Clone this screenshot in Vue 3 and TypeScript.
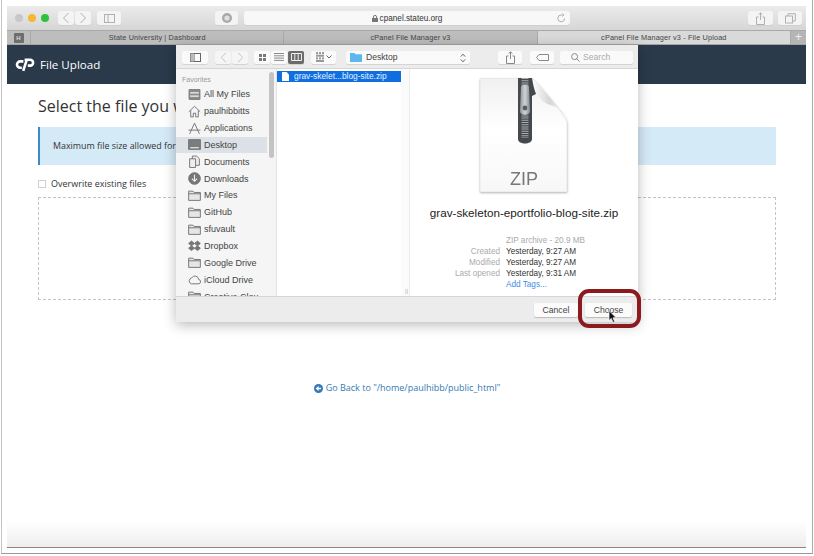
<template>
  <div class="shot">
    <div class="frame">
      <div class="window">
        <div class="toolbar">
          <div class="lights">
            <span class="light grey" />
            <span class="light yellow" />
            <span class="light green" />
          </div>
          <div class="btn-group">
            <button class="tb-btn nav"><svg width="8" height="12" viewBox="0 0 8 12"><path d="M6.5 1 1.5 6l5 5" class="stroke" /></svg></button>
            <button class="tb-btn nav"><svg width="8" height="12" viewBox="0 0 8 12"><path d="M1.5 1l5 5-5 5" class="stroke" /></svg></button>
          </div>
          <button class="tb-btn sidebar-btn">
            <svg width="11" height="9" viewBox="0 0 11 9"><rect x=".5" y=".5" width="10" height="8" class="stroke" /><path d="M4 .5v8" class="stroke" /></svg>
          </button>
          <button class="tb-btn reader-btn">
            <svg width="12" height="12" viewBox="0 0 12 12"><circle cx="6" cy="6" r="5" fill="#a9a9a9" /><circle cx="6" cy="6" r="2.6" fill="#e0e0e0" /></svg>
          </button>
          <div class="address">
            <span class="url"><svg class="lock" width="6" height="7" viewBox="0 0 6 7"><path d="M1.4 3V2a1.6 1.6 0 0 1 3.2 0v1" fill="none" stroke="#777" /><rect y="3" width="6" height="4" fill="#777" /></svg>cpanel.stateu.org</span>
            <svg class="reload" width="9" height="10" viewBox="0 0 9 10"><path d="M7.6 5.4A3.4 3.4 0 1 1 4.5 2h2" class="stroke" /><path d="M5.4.6 6.9 2 5.4 3.4" class="stroke" /></svg>
          </div>
          <button class="tb-btn share-btn">
            <svg width="9" height="13" viewBox="0 0 9 13"><path d="M2.5 5H.5v7.5h8V5h-2M4.5 8V1M2.6 2.6 4.5.8l1.9 1.8" class="stroke" /></svg>
          </button>
          <button class="tb-btn tabs-btn">
            <svg width="11" height="11" viewBox="0 0 11 11"><rect x=".5" y="3" width="7" height="7" class="stroke" /><path d="M3 3V.7h7.3V8H7.5" class="stroke" /></svg>
          </button>
        </div>

        <div class="tabs">
          <div class="tab-pin"><span>H</span></div>
          <div class="tab">State University | Dashboard</div>
          <div class="tab">cPanel File Manager v3</div>
          <div class="tab active">cPanel File Manager v3 - File Upload</div>
          <div class="tab-add">+</div>
        </div>

        <header class="app-header">
          <svg class="cp-logo" width="20" height="14" viewBox="0 0 20 14" fill="none" stroke="#fff" stroke-width="2.6">
            <path d="M8.4 3.4H5.2a3.2 3.2 0 0 0 0 6.4h1.6" />
            <path d="M9.6 1.8h5.6a2.9 2.9 0 0 1 0 5.8h-2.4" />
            <path d="M11.6 2.4 8.2 12.8" />
          </svg>
          <span>File Upload</span>
        </header>

        <main class="page">
          <h1>Select the file you w</h1>
          <div class="info">Maximum file size allowed for</div>
          <label class="overwrite"><span class="check" />Overwrite existing files</label>
          <div class="dropzone" />
          <a class="back">
            <svg width="9" height="9" viewBox="0 0 9 9"><circle cx="4.5" cy="4.5" r="4.5" fill="#337ab7" /><path d="M7 4.5H3M4.6 2.6 2.6 4.5l2 1.9" fill="none" stroke="#fff" stroke-width="1.3" /></svg>
            Go Back to "/home/paulhibb/public_html"
          </a>
        </main>
        <div class="bottom-fade" />

        <section class="dialog">
          <div class="dlg-toolbar">
            <button class="d-btn w-side"><svg width="11" height="9" viewBox="0 0 11 9"><rect x=".5" y=".5" width="10" height="8" class="dark" /><path d="M4 .5v8" class="dark" /><path d="M.5 .5h3.5v8H.5z" fill="#bbb" /></svg></button>
            <div class="d-group nav-group">
              <button class="d-btn w-nav faded"><svg width="7" height="11" viewBox="0 0 7 11"><path d="M6 .8 1.2 5.5 6 10.2" class="pale" /></svg></button>
              <button class="d-btn w-nav faded"><svg width="7" height="11" viewBox="0 0 7 11"><path d="M1 .8l4.8 4.7L1 10.2" class="pale" /></svg></button>
            </div>
            <div class="d-group views">
              <button class="d-btn w-view"><svg width="7" height="7" viewBox="0 0 7 7" fill="#777"><rect width="3" height="3" /><rect x="4" width="3" height="3" /><rect y="4" width="3" height="3" /><rect x="4" y="4" width="3" height="3" /></svg></button>
              <button class="d-btn w-view"><svg width="10" height="8" viewBox="0 0 10 8"><path d="M0 .5h10M0 2.8h10M0 5.1h10M0 7.4h10" class="mid" /></svg></button>
              <button class="d-btn w-view on"><svg width="11" height="8" viewBox="0 0 11 8"><path d="M.5.5h10v7H.5zM3.8.5v7M7.2.5v7" fill="none" stroke="#eee" /></svg></button>
            </div>
            <button class="d-btn w-arrange">
              <svg width="8" height="10" viewBox="0 0 8 10" fill="#999"><rect width="2" height="2" /><rect x="3" width="2" height="2" /><rect x="6" width="2" height="2" /><rect y="2.7" width="8" height="2" /><rect y="5.4" width="2" height="2" /><rect x="3" y="5.4" width="2" height="2" /><rect x="6" y="5.4" width="2" height="2" /><rect y="8" width="8" height="2" /></svg>
              <svg width="6" height="4" viewBox="0 0 6 4"><path d="M.5.5 3 3 5.5.5" class="dark" /></svg>
            </button>
            <div class="d-btn path">
              <svg width="12" height="10" viewBox="0 0 12 10"><path d="M0 1h4.5l1 1.2H12V10H0z" fill="#5cb8ec" /></svg>
              <span>Desktop</span>
              <svg class="updown" width="6" height="10" viewBox="0 0 6 10"><path d="M.8 3.6 3 1.2l2.2 2.4M.8 6.4 3 8.8l2.2-2.4" class="dark" /></svg>
            </div>
            <button class="d-btn w-share"><svg width="9" height="13" viewBox="0 0 9 13"><path d="M2.5 5H.5v7.5h8V5h-2M4.5 8V1M2.6 2.6 4.5.8l1.9 1.8" class="mid" /></svg></button>
            <button class="d-btn w-tag"><svg width="13" height="7" viewBox="0 0 13 7"><path d="M3 .5h9.5v6H3L.6 3.5z" class="mid" /></svg></button>
            <div class="d-btn search"><svg width="9" height="9" viewBox="0 0 9 9"><circle cx="3.6" cy="3.6" r="3" class="mid" /><path d="M5.8 5.8 8.6 8.6" class="mid" /></svg><span>Search</span></div>
          </div>

          <div class="dlg-body">
            <aside class="places">
              <div class="places-title">Favorites</div>
              <ul>
                <li v-for="p in places" :key="p.name" :class="{ current: p.name === 'Desktop' }">
                  <svg width="13" height="13" viewBox="0 0 12 12">
                    <path :d="p.icon" :fill="p.fill" stroke="#777" stroke-width=".9" />
                    <path v-if="p.mark" :d="p.mark" fill="none" stroke="#f2f2f2" />
                  </svg>
                  {{ p.name }}
                </li>
              </ul>
              <span class="places-scroll" />
            </aside>
            <div class="column">
              <div class="file-row">
                <svg width="7" height="9" viewBox="0 0 7 9"><path d="M0 0h4.6L7 2.4V9H0z" fill="#fff" /></svg>
                grav-skelet...blog-site.zip
              </div>
              <span class="col-handle">||</span>
            </div>
            <div class="preview">
              <div class="zip-icon">
                <svg width="88" height="114" viewBox="0 0 88 114">
                  <defs>
                    <linearGradient id="zipPaper" x1="0" y1="0" x2="0" y2="1">
                      <stop offset="0" stop-color="#f0f0f0" />
                      <stop offset=".45" stop-color="#fff" />
                      <stop offset="1" stop-color="#f7f7f7" />
                    </linearGradient>
                    <linearGradient id="zipFlap" x1="0" y1="0" x2="1" y2="0">
                      <stop offset="0" stop-color="#fff" />
                      <stop offset=".5" stop-color="#d6d6d6" />
                      <stop offset="1" stop-color="#fbfbfb" />
                    </linearGradient>
                    <linearGradient id="zipPull" x1="0" y1="0" x2="1" y2="0">
                      <stop offset="0" stop-color="#8e9499" />
                      <stop offset=".5" stop-color="#cfd4d8" />
                      <stop offset="1" stop-color="#868b90" />
                    </linearGradient>
                  </defs>
                  <path d="M0 0h52C60 8 80 30 87 44v70H0z" fill="url(#zipPaper)" stroke="#dcdcdc" stroke-width=".6" />
                  <path d="M52 0c2 14 8 24 18 27 8 2 15 7 17 17C80 30 60 8 52 0z" fill="url(#zipFlap)" />
                  <path d="M38 0h14c1 6 2 11 4 16l-4 2v43c0 6-14 6-14 0z" fill="#45484c" />
                  <path d="M45 0v60" stroke="#a9adb0" stroke-width="7" stroke-dasharray="1 1.2" />
                  <path d="M41 9c0-3 8-3 8 0l1 24c0 5-10 5-10 0z" fill="url(#zipPull)" />
                  <circle cx="45" cy="30" r="2.4" fill="#5a5d61" />
                </svg>
                <span class="zip-label">ZIP</span>
              </div>
              <div class="file-name">grav-skeleton-eportfolio-blog-site.zip</div>
              <dl class="meta">
                <dt />
                <dd class="kind">ZIP archive - 20.9 MB</dd>
                <template v-for="m in meta" :key="m.k">
                  <dt>{{ m.k }}</dt>
                  <dd>{{ m.v }}</dd>
                </template>
                <dt />
                <dd class="tags">Add Tags...</dd>
              </dl>
            </div>
          </div>

          <div class="dlg-footer">
            <button class="foot-btn cancel">Cancel</button>
            <button class="foot-btn choose">Choose</button>
          </div>
        </section>

        <div class="callout" />
        <svg class="cursor" width="9" height="13" viewBox="0 0 9 13"><path d="M1 .6v10l2.3-2.2 1.7 4 1.7-.7-1.7-3.9h3.2z" fill="#111" stroke="#fff" stroke-width=".7" /></svg>
      </div>
    </div>
  </div>
</template>

<script setup lang="ts">
type Place = { name: string; icon: string; fill: string; mark?: string };

const folder = "M.6 2h4l1 1.2h5.8v7.3H.6zM.6 4.4h10.8";

const places: Place[] = [
  { name: "All My Files", icon: "M1 1.5h10v9H1z", fill: "#8d8d8d", mark: "M2 4.5h8M2 7.5h8" },
  { name: "paulhibbitts", icon: "M.8 6.2 6 1.2l5.2 5M2.5 5v6h2.4V7.6h2.2V11h2.4V5", fill: "none" },
  { name: "Applications", icon: "M6 1 1.5 11M6 1l4.5 10M.5 7.5h11", fill: "none" },
  { name: "Desktop", icon: "M.5 1.5h11v9H.5z", fill: "#7c7c7c", mark: "M2 9h8" },
  { name: "Documents", icon: "M1.5 3.5h5.5v8H1.5zM4 3.5v-2.5h4l2.5 2.5v6H7", fill: "#eee" },
  { name: "Downloads", icon: "M6 .6a5.4 5.4 0 1 0 0 10.8A5.4 5.4 0 0 0 6 .6z", fill: "#777", mark: "M6 2.6v6M3.6 6.2 6 8.6l2.4-2.4" },
  { name: "My Files", icon: folder, fill: "#e6e6e6" },
  { name: "GitHub", icon: folder, fill: "#e6e6e6" },
  { name: "sfuvault", icon: folder, fill: "#e6e6e6" },
  { name: "Dropbox", icon: "M3.2 1 .6 3.2l2.6 2.2L6 3.2zM8.8 1 6 3.2l2.8 2.2 2.6-2.2zM3.2 5.4.6 7.6l2.6 2.1L6 7.6zM8.8 5.4 6 7.6l2.8 2.1 2.6-2.1z", fill: "#777" },
  { name: "Google Drive", icon: folder, fill: "#e6e6e6" },
  { name: "iCloud Drive", icon: "M3 10h6.4a2 2 0 0 0 .4-4A3.4 3.4 0 0 0 3.4 4.6 2.8 2.8 0 0 0 3 10z", fill: "none" },
  { name: "Creative Clou", icon: folder, fill: "#e6e6e6" },
];

const meta = [
  { k: "Created", v: "Yesterday, 9:27 AM" },
  { k: "Modified", v: "Yesterday, 9:27 AM" },
  { k: "Last opened", v: "Yesterday, 9:31 AM" },
];
</script>

<style>
html, body {
  margin: 0;
  background: #fff;
}
</style>

<style scoped>
.shot {
  width: 814px;
  height: 556px;
  box-sizing: border-box;
  padding-left: 1px;
  background: #fff;
  overflow: hidden;
  font-family: "Liberation Sans", Arial, sans-serif;
}
.frame {
  width: 812px;
  height: 554px;
  box-sizing: border-box;
  padding: 6px 0 0 5px;
  border-left: 1px solid #c4c4c4;
  border-right: 1px solid #aaa;
  border-bottom: 1px solid #999;
}
.window {
  position: relative;
  width: 799px;
  height: 542px;
  box-sizing: border-box;
  display: flex;
  flex-direction: column;
  background: #fff;
  overflow: hidden;
  border-bottom: 1px solid #8f8480;
}
button {
  padding: 0;
  border: 0;
  font-family: inherit;
  display: flex;
  align-items: center;
  justify-content: center;
}
.stroke {
  fill: none;
  stroke: #b0b0b0;
}
.pale {
  fill: none;
  stroke: #c4c4c4;
}
.mid {
  fill: none;
  stroke: #888;
}
.dark {
  fill: none;
  stroke: #666;
}

.toolbar {
  height: 24px;
  flex: none;
  display: flex;
  align-items: center;
  background: linear-gradient(#ebebeb, #d6d6d6);
}
.lights {
  display: flex;
  gap: 5px;
  margin-left: 8px;
}
.light {
  width: 8px;
  height: 8px;
  border-radius: 50%;
}
.grey { background: #c8c8c8; }
.yellow { background: #f5b82e; }
.green { background: #2ec240; }
.btn-group {
  display: flex;
  gap: 1px;
  margin-left: 9px;
}
.tb-btn {
  height: 14px;
  background: #f4f4f4;
  border-radius: 3px;
  box-shadow: 0 1px 0 #cfcfcf;
}
.nav { width: 16px; }
.sidebar-btn { width: 24px; margin-left: 6px; }
.reader-btn { width: 23px; margin-left: 94px; }
.address {
  width: 326px;
  height: 14px;
  margin-left: 6px;
  background: #f8f8f8;
  border-radius: 3px;
  box-shadow: 0 1px 0 #cfcfcf;
  display: flex;
  align-items: center;
  position: relative;
  justify-content: center;
  font-size: 8.2px;
  color: #333;
}
.lock { margin-right: 2px; }
.url { display: flex; align-items: center; }
.reload { position: absolute; right: 4px; top: 2px; }
.share-btn { width: 25px; margin-left: 178px; }
.tabs-btn { width: 24px; margin-left: 5px; }

.tabs {
  height: 15px;
  flex: none;
  display: flex;
  background: #bdbdbd;
  border-top: 1px solid #a9a9a9;
  border-bottom: 1px solid #a3a3a3;
  box-sizing: border-box;
  font-size: 7.3px;
  line-height: 13px;
  color: #444;
}
.tab-pin {
  width: 24px;
  flex: none;
  border-right: 1px solid #a9a9a9;
  box-sizing: border-box;
  display: flex;
  align-items: center;
  justify-content: center;
}
.tab-pin span {
  width: 10px;
  height: 10px;
  background: #6e6e6e;
  color: #ddd;
  border-radius: 1px;
  font-size: 6px;
  font-weight: bold;
  line-height: 10px;
  text-align: center;
}
.tab {
  flex: 1;
  text-align: center;
  letter-spacing: .15px;
  border-right: 1px solid #a9a9a9;
}
.tab.active { background: #d9d9d9; }
.tab-add {
  width: 15px;
  flex: none;
  text-align: center;
  background: #b5b5b5;
  font-size: 12px;
  color: #eee;
}

.app-header {
  height: 39px;
  flex: none;
  background: #2a3a4a;
  display: flex;
  align-items: center;
  color: #fff;
  font-family: "Open Sans", sans-serif;
  font-size: 11.6px;
}
.cp-logo { margin-left: 8px; margin-right: 5px; }

.page {
  flex: 1;
  padding: 0 30px 0 31px;
  font-family: "Open Sans", sans-serif;
  color: #333;
  position: relative;
}
.page h1 {
  margin: 11px 0 10px;
  font-size: 16px;
  font-weight: 400;
  line-height: 22px;
  white-space: nowrap;
}
.info {
  height: 38px;
  box-sizing: border-box;
  background: #d5eaf7;
  border-left: 2px solid #3d8ac7;
  padding-left: 13px;
  font-size: 8.9px;
  line-height: 38px;
}
.overwrite {
  display: flex;
  align-items: center;
  gap: 5px;
  margin-top: 12px;
  font-size: 9px;
  line-height: 14px;
}
.check {
  width: 6px;
  height: 6px;
  border: 1px solid #d0d0d0;
  background: #fff;
}
.dropzone {
  height: 101px;
  margin-top: 6px;
  border: 1px dashed #c4c4c4;
}
.back {
  display: flex;
  align-items: center;
  justify-content: center;
  gap: 3px;
  margin-top: 81px;
  font-size: 9px;
  line-height: 14px;
  color: #337ab7;
}
.bottom-fade {
  height: 26px;
  flex: none;
  margin-top: -26px;
  z-index: 1;
  background: linear-gradient(rgba(238, 238, 238, 0), #eeeeee);
}

.dialog {
  position: absolute;
  left: 169px;
  top: 39px;
  width: 462px;
  height: 277px;
  z-index: 2;
  display: flex;
  flex-direction: column;
  background: #fff;
  box-shadow: 0 3px 12px rgba(0, 0, 0, .28);
  font-size: 8px;
  color: #444;
}
.dlg-toolbar {
  height: 24px;
  flex: none;
  box-sizing: border-box;
  padding: 1px 5px 0 6px;
  display: flex;
  align-items: center;
  background: #ececec;
  border-bottom: 1px solid #d6d6d6;
}
.d-group { display: flex; gap: 1px; }
.d-btn {
  height: 13px;
  background: #fafafa;
  border-radius: 2px;
  box-shadow: 0 1px 0 #d4d4d4;
  display: flex;
  align-items: center;
  justify-content: center;
}
.faded { background: #f5f5f5; }
.w-side { width: 26px; }
.nav-group { margin-left: 7px; }
.w-nav { width: 16px; }
.views { margin-left: 6px; }
.w-view { width: 16px; }
.on { background: #6b6b6b; }
.w-arrange { width: 25px; margin-left: 7px; gap: 2px; }
.path {
  width: 124px;
  margin-left: 10px;
  justify-content: flex-start;
  gap: 4px;
  padding-left: 4px;
  box-sizing: border-box;
  font-size: 8.6px;
  position: relative;
}
.updown { position: absolute; right: 4px; top: 2px; }
.w-share { width: 24px; margin-left: 28px; }
.w-tag { width: 24px; margin-left: 8px; }
.search {
  width: 73px;
  margin-left: 6px;
  justify-content: flex-start;
  gap: 3px;
  padding-left: 11px;
  box-sizing: border-box;
  color: #aaa;
  font-size: 8.6px;
}

.dlg-body {
  flex: 1;
  display: flex;
  min-height: 0;
}
.places {
  width: 101px;
  flex: none;
  position: relative;
  background: #f5f5f5;
  overflow: hidden;
  border-right: 1px solid #e3e3e3;
  box-sizing: border-box;
}
.places-title {
  margin: 6px 0 0 6px;
  font-size: 7px;
  line-height: 10px;
  color: #999;
}
.places ul {
  list-style: none;
  margin: 1px 0 0;
  padding: 0;
}
.places li {
  height: 16.85px;
  width: 91px;
  display: flex;
  align-items: center;
  gap: 3px;
  padding-left: 12px;
  box-sizing: border-box;
  font-size: 9px;
  white-space: nowrap;
}
.places li.current { background: #dbe1e6; }
.places-scroll {
  position: absolute;
  right: 2px;
  top: 3px;
  width: 5px;
  height: 86px;
  border-radius: 3px;
  background: #c4c4c4;
}
.column {
  width: 133px;
  flex: none;
  position: relative;
  border-right: 1px solid #ececec;
  box-sizing: border-box;
  background: linear-gradient(to right, #fff 124px, #fbfbfb 124px);
}
.file-row {
  margin-top: 2px;
  width: 124px;
  height: 11px;
  background: #0f6fe0;
  color: #e5efff;
  font-size: 8.4px;
  line-height: 11px;
  display: flex;
  align-items: center;
  gap: 5px;
  padding-left: 5px;
  box-sizing: border-box;
  white-space: nowrap;
}
.col-handle {
  position: absolute;
  right: 1px;
  bottom: 2px;
  font-size: 6px;
  color: #aaa;
}
.preview {
  flex: 1;
  display: flex;
  flex-direction: column;
  align-items: center;
  min-width: 0;
}
.zip-icon {
  margin-top: 9px;
  position: relative;
  width: 88px;
  height: 114px;
  filter: drop-shadow(0 1px 1px rgba(0, 0, 0, .3));
}
.zip-label {
  position: absolute;
  left: 0;
  right: 0;
  bottom: 3px;
  text-align: center;
  font-size: 18px;
  line-height: 20px;
  color: #777;
}
.file-name {
  margin-top: 14px;
  font-size: 11.7px;
  line-height: 14px;
  color: #222;
}
.meta {
  margin: 15px 0 0;
  display: grid;
  grid-template-columns: 90px auto;
  column-gap: 6px;
  width: 190px;
  align-self: flex-start;
  font-size: 8.2px;
  line-height: 11px;
}
.meta dt {
  text-align: right;
  color: #aaa;
}
.meta dd {
  margin: 0;
  color: #333;
}
.meta .kind { color: #aaa; }
.meta .tags { color: #3d8ee8; }

.dlg-footer {
  height: 26px;
  flex: none;
  box-sizing: border-box;
  border-top: 1px solid #d6d6d6;
  background: #ececec;
  display: flex;
  align-items: center;
  justify-content: flex-end;
  gap: 7px;
  padding-right: 6px;
}
.foot-btn {
  height: 14px;
  background: #fbfbfb;
  border-radius: 2px;
  box-shadow: 0 1px 1px #bbb;
  font-size: 8.6px;
  color: #444;
}
.cancel { width: 44px; }
.choose { width: 47px; }

.callout {
  position: absolute;
  left: 571px;
  top: 283px;
  width: 63px;
  height: 39px;
  box-sizing: border-box;
  border: 4px solid #8b1a1f;
  border-radius: 11px;
  z-index: 3;
}
.cursor {
  position: absolute;
  left: 601px;
  top: 304px;
  z-index: 4;
}
</style>
